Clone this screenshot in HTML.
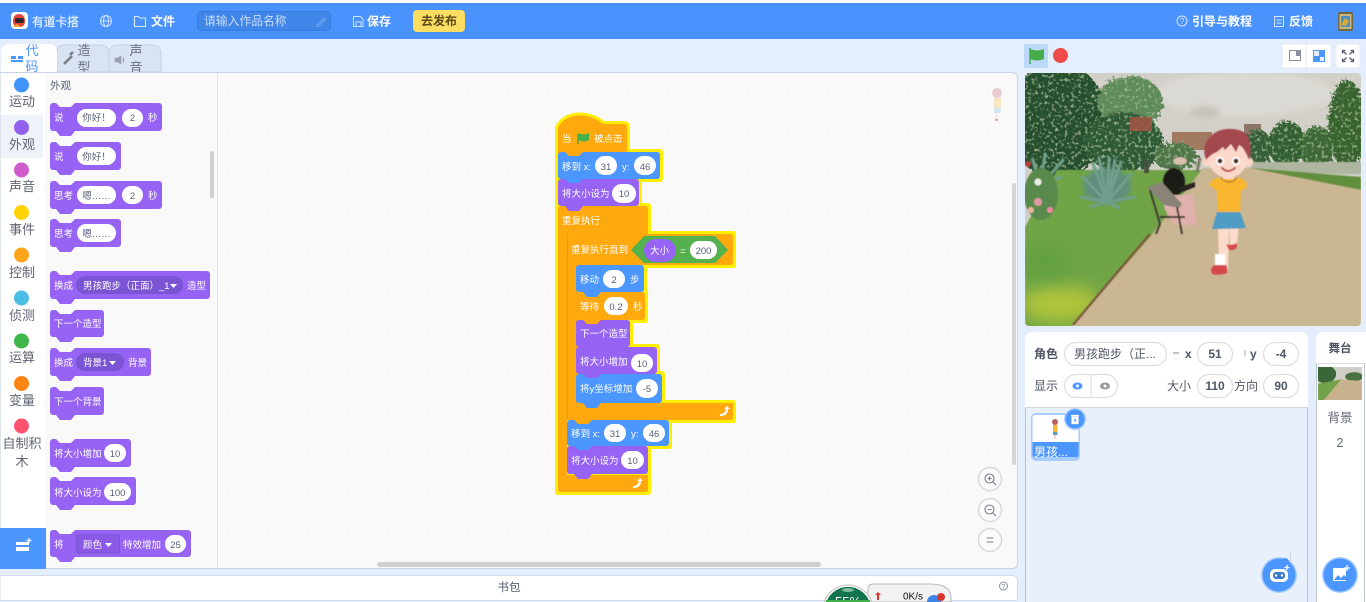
<!DOCTYPE html>
<html lang="zh"><head><meta charset="utf-8"><title>有道卡搭</title>
<style>
html,body{margin:0;padding:0;width:1366px;height:602px;overflow:hidden;background:#e4eefd}
svg{display:block}
text{font-family:"Liberation Sans","Noto Sans CJK SC","WenQuanYi Zen Hei",sans-serif}
.w{fill:#fff;font-size:9.5px}
.n{fill:#575e75;font-size:9.5px;text-anchor:middle}
.c{fill:#5f6473;font-size:13px;text-anchor:middle}
.h{fill:#fff;font-size:12px;font-weight:bold}
.s{fill:#4f5566;font-size:12px}
.sb{fill:#4f5566;font-size:12px;font-weight:bold;text-anchor:middle}
.p{fill:#9663f5}.u{fill:#4c97ff}.o{fill:#ffa90f}
.pill{fill:#fff}
</style></head><body>
<svg width="1366" height="602" viewBox="0 0 1366 602" xmlns="http://www.w3.org/2000/svg">
<defs>
<pattern id="dots" width="40" height="40" patternUnits="userSpaceOnUse" x="218" y="72"><circle cx="10" cy="20" r="1" fill="#f0f0f0"/></pattern>
<filter id="leaf" x="-15%" y="-15%" width="130%" height="130%"><feTurbulence type="fractalNoise" baseFrequency=".3" numOctaves="3" seed="7" result="n"/><feDisplacementMap in="SourceGraphic" in2="n" scale="11" result="d"/><feColorMatrix in="n" type="matrix" values="0 0 0 0 .40  0 0 0 0 .56  0 0 0 0 .34  0 0 0 3 -1.650" result="l"/><feComposite in="l" in2="d" operator="in" result="lc"/><feMerge><feMergeNode in="d"/><feMergeNode in="lc"/></feMerge></filter>
<filter id="soft"><feGaussianBlur stdDeviation="0.5"/></filter>
<filter id="soft3"><feGaussianBlur stdDeviation="2.5"/></filter>
<filter id="soft8" x="-30%" y="-30%" width="160%" height="160%"><feGaussianBlur stdDeviation="9"/></filter>
<clipPath id="stage"><rect x="0" y="0" width="336" height="253" rx="4"/></clipPath>
<clipPath id="pal"><rect x="45" y="73" width="173" height="496"/></clipPath>
</defs>

<!-- page + header -->
<rect width="1366" height="602" fill="#e4eefd"/>
<rect width="1366" height="3" fill="#fff"/>
<rect y="3" width="1366" height="36" fill="#4a93ff"/>
<rect x="11" y="12" width="17" height="17" rx="4" fill="#fff"/>
<path d="M13 21c0-5 3-7 6-7s6 2 6 7-3 6-6 6-6-1-6-6z" fill="#e5433d"/>
<rect x="15" y="18" width="9" height="5" rx="2" fill="#33262a"/>
<path d="M13 26l4-2 4 3h-6z" fill="#f4a533"/>
<text x="32" y="26" style="font-size:11.7px;fill:#e6f0ff;stroke:#e6f0ff;stroke-width:.25">有道卡搭</text>
<g fill="none" stroke="#cfe2ff" stroke-width="1"><circle cx="106" cy="21" r="5.5"/><ellipse cx="106" cy="21" rx="2.5" ry="5.5"/><path d="M100.5 21h11"/></g>
<path d="M134.5 16.5h4l1.500 1.500h5.500v8.500h-11z" fill="none" stroke="#dcebff" stroke-width="1.100"/>
<text x="151" y="25.500" class="h">文件</text>
<rect x="197.500" y="11.500" width="133" height="19" rx="4" fill="#3f86e8" stroke="#327ade"/>
<text x="204" y="25" style="font-size:11.800px;fill:#cbdffb">请输入作品名称</text>
<path d="M316 25l8-8 3 2-8 8h-3z" fill="#5c9bee"/>
<path d="M353.500 16.500h7l2.500 2.500v7.500h-9.500z M356 22h5v4.500h-5z" fill="none" stroke="#cfe2ff"/>
<text x="367" y="25.500" class="h">保存</text>
<rect x="413" y="10" width="52" height="22" rx="4" fill="#fbdd62"/>
<text x="439" y="25" style="font-size:12px;font-weight:bold;fill:#5d4a1c;text-anchor:middle">去发布</text>
<circle cx="1182" cy="21" r="5" fill="none" stroke="#d6e6ff"/>
<text x="1182" y="24" style="font-size:8px;fill:#d6e6ff;text-anchor:middle">?</text>
<text x="1192" y="25.500" class="h">引导与教程</text>
<path d="M1274.500 16.500h9v10h-9z M1276.500 20h5 M1276.500 23h5" fill="none" stroke="#d6e6ff"/>
<text x="1289" y="25.500" class="h">反馈</text>
<rect x="1338" y="12" width="15" height="19" rx="2" fill="#6e6648"/><rect x="1339.500" y="14" width="12" height="15" fill="#c9b77c"/><rect x="1341" y="16" width="9" height="11" fill="#4d8fc0"/><path d="M1341 25l4-7 4 3-3 5z" fill="#d8a734"/>

<!-- tabs -->
<path d="M57 72V52q0-7 7-7h36q9 0 9 9v18z" fill="#d9e3f2" stroke="#c8d2e2"/>
<path d="M109 72V54q0-9 9-9h34q9 0 9 9v18z" fill="#d9e3f2" stroke="#c8d2e2"/>
<path d="M1 72V53q0-9 9-9h38q9 0 9 9v19z" fill="#fff"/>
<path d="M11 56h5v3h-5z M18 56h5v3h-5z M11 60h12v2h-12z" fill="#4c97ff"/>
<path d="M64 64l8-8M70 55l3-3" stroke="#7b7f8a" stroke-width="2.500" fill="none"/>
<path d="M115 58h3l3-2v8l-3-2h-3z M123 57q2 3 0 6" fill="#9a9fad" stroke="#9a9fad" stroke-width=".6"/>
<text x="32" y="55" style="font-size:13px;fill:#4c97ff;text-anchor:middle">代</text>
<text x="32" y="71" style="font-size:13px;fill:#4c97ff;text-anchor:middle">码</text>
<text x="84" y="55" style="font-size:13px;fill:#6b7080;text-anchor:middle">造</text>
<text x="84" y="72" style="font-size:13px;fill:#6b7080;text-anchor:middle">型</text>
<text x="136" y="55" style="font-size:13px;fill:#6b7080;text-anchor:middle">声</text>
<text x="136" y="72" style="font-size:13px;fill:#6b7080;text-anchor:middle">音</text>

<!-- main panel -->
<path d="M0 72.500H1012q5.500 0 5.500 5.500V563q0 5.500-5.500 5.500H0z" fill="#f9f9f9" stroke="#c8d3e4"/>
<rect x="219" y="73" width="798" height="495" fill="url(#dots)"/>
<rect x="1" y="73" width="44" height="496" fill="#fff"/>
<rect x="1" y="115" width="42" height="43" fill="#eef3fa"/>
<path d="M217.500 73V568" stroke="#e2e4e8"/>
<g>
<circle cx="21.500" cy="85" r="7.500" fill="#3f94fb"/>
<circle cx="21.500" cy="127.500" r="7.500" fill="#9160ec"/>
<circle cx="21.500" cy="170" r="7.500" fill="#cf5ccb"/>
<circle cx="21.500" cy="212.500" r="7.500" fill="#ffd305"/>
<circle cx="21.500" cy="255" r="7.500" fill="#ffa51b"/>
<circle cx="21.500" cy="298" r="7.500" fill="#4cbde4"/>
<circle cx="21.500" cy="341" r="7.500" fill="#3fb64a"/>
<circle cx="21.500" cy="383.500" r="7.500" fill="#ff8414"/>
<circle cx="21.500" cy="426" r="7.500" fill="#ff5470"/>
<text x="22" y="106" class="c">运动</text>
<text x="22" y="149" class="c">外观</text>
<text x="22" y="191" class="c">声音</text>
<text x="22" y="234" class="c">事件</text>
<text x="22" y="277" class="c">控制</text>
<text x="22" y="320" class="c">侦测</text>
<text x="22" y="362" class="c">运算</text>
<text x="22" y="405" class="c">变量</text>
<text x="22" y="448" class="c">自制积</text>
<text x="22" y="466" class="c">木</text>
</g>
<rect x="0" y="528" width="46" height="41" fill="#4c97ff"/>
<path d="M16 542h13v3h-13z M16 547h13v4h-13z" fill="#fff"/>
<path d="M29 538v5M26.500 540.500h5" stroke="#fff" stroke-width="1.200"/>

<!-- palette -->
<g clip-path="url(#pal)">
<text x="50" y="89" style="font-size:10.500px;fill:#575e75">外观</text>
<g class="p">
<path d="M50 106a3 3 0 0 1 3-3h3l4 4h11l4-4h84a3 3 0 0 1 3 3v22a3 3 0 0 1-3 3h-84l-4 5h-11l-4-5h-3a3 3 0 0 1-3-3z"/>
<path d="M50 145a3 3 0 0 1 3-3h3l4 4h11l4-4h43a3 3 0 0 1 3 3v22a3 3 0 0 1-3 3h-43l-4 5h-11l-4-5h-3a3 3 0 0 1-3-3z"/>
<path d="M50 184a3 3 0 0 1 3-3h3l4 4h11l4-4h84a3 3 0 0 1 3 3v22a3 3 0 0 1-3 3h-84l-4 5h-11l-4-5h-3a3 3 0 0 1-3-3z"/>
<path d="M50 222a3 3 0 0 1 3-3h3l4 4h11l4-4h43a3 3 0 0 1 3 3v22a3 3 0 0 1-3 3h-43l-4 5h-11l-4-5h-3a3 3 0 0 1-3-3z"/>
<path d="M50 274a3 3 0 0 1 3-3h3l4 4h11l4-4h132a3 3 0 0 1 3 3v22a3 3 0 0 1-3 3h-132l-4 5h-11l-4-5h-3a3 3 0 0 1-3-3z"/>
<path d="M50 313a3 3 0 0 1 3-3h3l4 4h11l4-4h26a3 3 0 0 1 3 3v21a3 3 0 0 1-3 3h-26l-4 5h-11l-4-5h-3a3 3 0 0 1-3-3z"/>
<path d="M50 351a3 3 0 0 1 3-3h3l4 4h11l4-4h73a3 3 0 0 1 3 3v22a3 3 0 0 1-3 3h-73l-4 5h-11l-4-5h-3a3 3 0 0 1-3-3z"/>
<path d="M50 390a3 3 0 0 1 3-3h3l4 4h11l4-4h26a3 3 0 0 1 3 3v22a3 3 0 0 1-3 3h-26l-4 5h-11l-4-5h-3a3 3 0 0 1-3-3z"/>
<path d="M50 442a3 3 0 0 1 3-3h3l4 4h11l4-4h53a3 3 0 0 1 3 3v22a3 3 0 0 1-3 3h-53l-4 5h-11l-4-5h-3a3 3 0 0 1-3-3z"/>
<path d="M50 480a3 3 0 0 1 3-3h3l4 4h11l4-4h58a3 3 0 0 1 3 3v22a3 3 0 0 1-3 3h-58l-4 5h-11l-4-5h-3a3 3 0 0 1-3-3z"/>
<path d="M50 533a3 3 0 0 1 3-3h3l4 4h11l4-4h113a3 3 0 0 1 3 3v21a3 3 0 0 1-3 3h-113l-4 5h-11l-4-5h-3a3 3 0 0 1-3-3z"/>
</g>
<g class="pill">
<rect x="77" y="109" width="39" height="18" rx="9"/><rect x="122" y="109" width="21" height="18" rx="9"/>
<rect x="77" y="147" width="39" height="18" rx="9"/>
<rect x="77" y="186" width="39" height="18" rx="9"/><rect x="122" y="186" width="21" height="18" rx="9"/>
<rect x="77" y="224" width="39" height="18" rx="9"/>
<rect x="104" y="444" width="22" height="18" rx="9"/>
<rect x="104" y="483" width="27" height="18" rx="9"/>
<rect x="165" y="535" width="21" height="18" rx="9"/>
</g>
<rect x="76" y="276" width="107" height="18" rx="9" fill="#7a54d2"/>
<rect x="76" y="353" width="48" height="18" rx="9" fill="#7a54d2"/>
<rect x="76.500" y="535" width="43" height="18" rx="2" fill="#8a5ae6" stroke="#7a54d2"/>
<g class="w">
<text x="54" y="121">说</text><text x="148" y="121">秒</text>
<text x="54" y="160">说</text>
<text x="54" y="199">思考</text><text x="148" y="199">秒</text>
<text x="54" y="237">思考</text>
<text x="54" y="289">换成</text><text x="83" y="289">男孩跑步（正面）_1</text><path d="M170 284h7l-3.500 4z" fill="#fff"/><text x="187" y="289">造型</text>
<text x="54" y="327">下一个造型</text>
<text x="54" y="366">换成</text><text x="83" y="366">背景1</text><path d="M109 361h7l-3.500 4z" fill="#fff"/><text x="128" y="366">背景</text>
<text x="54" y="405">下一个背景</text>
<text x="54" y="457">将大小增加</text>
<text x="54" y="496">将大小设为</text>
<text x="54" y="548">将</text><text x="83" y="548">颜色</text><path d="M105 543h7l-3.500 4z" fill="#fff"/><text x="123" y="548">特效增加</text>
</g>
<g class="n">
<text x="96.500" y="121">你好！</text><text x="132.500" y="121">2</text>
<text x="96.500" y="160">你好！</text>
<text x="96.500" y="199">嗯……</text><text x="132.500" y="199">2</text>
<text x="96.500" y="237">嗯……</text>
<text x="115" y="457">10</text><text x="117.500" y="496">100</text><text x="175.500" y="548">25</text>
</g>
</g>
<rect x="210" y="151" width="4" height="47" rx="2" fill="#cfcfcf"/>

<!-- script: yellow glow -->
<g fill="#ffee00" stroke="#ffee00" stroke-width="6" stroke-linejoin="round">
<path d="M558 128C565 112 590 112 603 124H624q3 0 3 3V152H558z"/>
<rect x="558" y="152" width="102" height="27"/>
<rect x="558" y="179" width="81" height="27"/>
<rect x="558" y="206" width="90" height="28"/>
<rect x="558" y="206" width="18" height="286"/>
<rect x="567" y="234" width="166" height="31"/>
<rect x="576" y="265" width="68" height="27"/>
<rect x="576" y="292" width="69" height="28"/>
<rect x="576" y="320" width="54" height="27"/>
<rect x="576" y="347" width="81" height="27"/>
<rect x="576" y="374" width="86" height="29"/>
<rect x="567" y="403" width="166" height="17"/>
<rect x="567" y="420" width="102" height="26"/>
<rect x="567" y="446" width="81" height="28"/>
<rect x="558" y="475" width="90" height="17"/>
</g>
<!-- script: blocks -->
<path class="o" d="M558 128C565 112 590 112 603 124H624q3 0 3 3V155H558z"/>
<path class="o" d="M558 209q0-3 3-3h84q3 0 3 3v25h-81v241h81v14q0 3-3 3h-84q-3 0-3-3z"/>
<path class="o" d="M567 237q0-3 3-3h160q3 0 3 3v25q0 3-3 3h-154v138h157v14q0 3-3 3H567z"/>
<path d="M567.500 234v186M576.500 265v138" stroke="#ee9c0a" fill="none"/>
<rect class="o" x="576" y="292" width="69" height="28" rx="3"/>
<rect class="u" x="576" y="265" width="68" height="27" rx="3"/>
<rect class="p" x="576" y="320" width="54" height="27" rx="3"/>
<rect class="p" x="576" y="347" width="81" height="27" rx="3"/>
<rect class="u" x="576" y="374" width="86" height="29" rx="3"/>
<rect class="u" x="567" y="420" width="102" height="26" rx="3"/>
<rect class="p" x="567" y="446" width="81" height="28" rx="3"/>
<rect class="u" x="558" y="152" width="102" height="27" rx="3"/>
<rect class="p" x="558" y="179" width="81" height="27" rx="3"/>
<!-- bumps -->
<path class="o" d="M565 152l4 4h10l4-4z"/>
<path class="u" d="M565 179l4 4h10l4-4z"/>
<path class="p" d="M565 206l4 5h10l4-5z"/>
<path class="o" d="M574 234l4 4h10l4-4z"/>
<path class="u" d="M583 292l4 5h10l4-5z"/>
<path class="o" d="M583 320l4 4h10l4-4z"/>
<path class="p" d="M583 347l4 4h10l4-4z"/>
<path class="p" d="M583 374l4 4h10l4-4z"/>
<path class="u" d="M583 403l4 5h10l4-5z"/>
<path class="o" d="M574 420l4 4h10l4-4z"/>
<path class="u" d="M574 446l4 4h10l4-4z"/>
<path class="p" d="M574 474l4 5h10l4-5z"/>
<!-- hexagon -->
<path d="M631 250l13-14h71l13 14-13 13h-71z" fill="#55b04e"/>
<rect x="644" y="239" width="32" height="23" rx="11.500" fill="#9663f5"/>
<g class="pill">
<rect x="595" y="156" width="22" height="19" rx="9.500"/><rect x="634" y="156" width="22" height="19" rx="9.500"/>
<rect x="612" y="184" width="24" height="19" rx="9.500"/>
<rect x="690" y="241" width="27" height="18" rx="9"/>
<rect x="603" y="270" width="22" height="18" rx="9"/>
<rect x="604" y="297" width="24" height="18" rx="9"/>
<rect x="631" y="354" width="22" height="18" rx="9"/>
<rect x="636" y="379" width="22" height="19" rx="9.500"/>
<rect x="604" y="424" width="22" height="18" rx="9"/><rect x="643" y="424" width="22" height="18" rx="9"/>
<rect x="621" y="451" width="23" height="18" rx="9"/>
</g>
<path d="M578 134v10" stroke="#3a9d3a" stroke-width="1.200"/><path d="M578 133q6 3 11 0v7q-5 3-11 0z" fill="#46b04a"/>
<g class="w">
<text x="562" y="142">当</text><text x="594" y="142">被点击</text>
<text x="562" y="170">移到 x:</text><text x="622" y="170">y:</text>
<text x="562" y="197">将大小设为</text>
<text x="562" y="224">重复执行</text>
<text x="571" y="253">重复执行直到</text>
<text x="650" y="254">大小</text><text x="680" y="254">=</text>
<text x="580" y="283">移动</text><text x="630" y="283">步</text>
<text x="580" y="310">等待</text><text x="633" y="310">秒</text>
<text x="580" y="337">下一个造型</text>
<text x="580" y="365">将大小增加</text>
<text x="580" y="392">将y坐标增加</text>
<text x="571" y="437">移到 x:</text><text x="631" y="437">y:</text>
<text x="571" y="464">将大小设为</text>
</g>
<g class="n">
<text x="606" y="170">31</text><text x="645" y="170">46</text>
<text x="624" y="197">10</text><text x="703.500" y="254">200</text>
<text x="614" y="283">2</text><text x="616" y="310">0.2</text>
<text x="642" y="367">10</text><text x="647" y="392">-5</text>
<text x="615" y="437">31</text><text x="654" y="437">46</text><text x="632.500" y="464">10</text>
</g>
<path d="M720 414q5 0 6-5l-2 0 3-3 3 3-2 0q0 7-8 7z" fill="#fff"/>
<path d="M633 486q5 0 6-5l-2 0 3-3 3 3-2 0q0 7-8 7z" fill="#fff"/>

<!-- workspace decorations -->
<g opacity=".45">
<circle cx="997" cy="93" r="5" fill="#d89aa0"/><rect x="994" y="98" width="7" height="10" fill="#fbd382"/><rect x="994" y="108" width="7" height="5" fill="#a8d0e0"/><rect x="995" y="113" width="3" height="7" fill="#f8dccb"/><rect x="995" y="119" width="3" height="2" fill="#d8464a"/>
</g>
<rect x="377" y="562" width="444" height="5" rx="2.500" fill="#cfcfcf"/>
<rect x="1012" y="183" width="4" height="282" rx="2" fill="#d4d4d4"/>
<g fill="#fbfbfb" stroke="#d9dadd" stroke-width="1.500">
<circle cx="990" cy="479" r="11.500"/><circle cx="990" cy="510" r="11.500"/><circle cx="990" cy="540" r="11.500"/>
</g>
<g fill="none" stroke="#7b7f8a" stroke-width="1.100">
<circle cx="989.500" cy="478.500" r="4.500"/><path d="M993 482l3 3M987.500 478.500h4M989.500 476.500v4"/>
<circle cx="989.500" cy="509.500" r="4.500"/><path d="M993 513l3 3M987.500 509.500h4"/>
<path d="M986.500 538h7M986.500 542h7"/>
</g>

<!-- backpack -->
<path d="M0 575.500H1012q5.500 0 5.500 5.500V600.500H0z" fill="#fff" stroke="#d5dce8"/>
<text x="509" y="591" style="font-size:11.500px;fill:#575e75;text-anchor:middle">书包</text>
<circle cx="1003.500" cy="586" r="4" fill="none" stroke="#8a8f9b"/>
<text x="1003.500" y="589" style="font-size:7px;fill:#8a8f9b;text-anchor:middle">?</text>
<rect x="0" y="601" width="1024" height="1" fill="#e4eefd"/>

<!-- stage controls -->
<rect x="1024" y="44" width="24" height="24" rx="2" fill="#bcd9fb"/>
<path d="M1030 48v16" stroke="#44ad4a" stroke-width="1.500"/><path d="M1030 49q7 3 14 0v10q-7 3-14 0z" fill="#44ad4a"/>
<circle cx="1060.500" cy="55.500" r="7.500" fill="#ee4b4b"/>
<rect x="1282" y="44" width="25" height="24" rx="2" fill="#fff" stroke="#e3e9f2"/>
<rect x="1306" y="44" width="25" height="24" rx="2" fill="#fff" stroke="#e3e9f2"/>
<rect x="1336" y="44" width="24" height="24" rx="2" fill="#fff" stroke="#e3e9f2"/>
<path d="M1289.500 50.500h11v10h-11z" fill="none" stroke="#8a8f9b"/><rect x="1296" y="51" width="4" height="5" fill="#8a8f9b"/>
<rect x="1313" y="50" width="12" height="12" fill="#4c97ff"/><rect x="1314" y="51" width="5" height="5" fill="#e4eefd"/><rect x="1320" y="57" width="4" height="4" fill="#e4eefd"/>
<path d="M1343 51l3.500 3.500M1353 51l-3.500 3.500M1343 61l3.500-3.500M1353 61l-3.500-3.500 M1342.500 53.500v-3h3M1353.500 53.500v-3h-3M1342.500 58.500v3h3M1353.500 58.500v3h-3" stroke="#575e75" stroke-width="1.300" fill="none"/>

<!-- stage scene -->
<svg x="1025" y="73" width="336" height="253" viewBox="0 0 336 253">
<g clip-path="url(#stage)"><g transform="translate(0,-1)">
<rect width="340" height="256" fill="#d2d0c9"/>
<g filter="url(#soft3)"><ellipse cx="220" cy="22" rx="90" ry="22" fill="#dbd9d3"/><ellipse cx="180" cy="40" rx="15" ry="6" fill="#c6c4bd"/></g>
<rect x="147" y="60" width="40" height="18" fill="#a27a62"/><rect x="219" y="52" width="17" height="14" fill="#8e7468"/>
<g filter="url(#leaf)">
<ellipse cx="32" cy="48" rx="50" ry="58" fill="#284f2e"/>
<ellipse cx="105" cy="30" rx="33" ry="26" fill="#5f8a5a"/>
<ellipse cx="98" cy="70" rx="40" ry="30" fill="#2e5a36"/>
<ellipse cx="150" cy="84" rx="22" ry="14" fill="#4f7648"/>
<ellipse cx="322" cy="52" rx="19" ry="44" fill="#37622f"/>
<ellipse cx="232" cy="76" rx="15" ry="19" fill="#355f34"/>
<ellipse cx="262" cy="72" rx="19" ry="23" fill="#335e32"/>
<ellipse cx="292" cy="76" rx="17" ry="22" fill="#3c6836"/>
</g>
<rect x="105" y="45" width="22" height="14" fill="#a45544" opacity=".85"/>
<g filter="url(#soft)">
<rect x="226" y="90" width="110" height="12" fill="#aeb6a0"/>
<polygon points="0,155 32,98 180,98 125,170 45,256 0,256" fill="#6fa446"/>
</g>
<ellipse cx="35" cy="232" rx="40" ry="18" fill="#b2c63a" filter="url(#soft8)"/>
<ellipse cx="20" cy="190" rx="25" ry="18" fill="#62a040" filter="url(#soft8)"/>
<g filter="url(#soft)">
<polygon points="178,96 225,96 336,113 336,256 45,256 125,165" fill="#cab692"/>
<polygon points="225,96 336,105 336,118" fill="#628f3e"/>
<polyline points="48,253 80,215 125,162" fill="none" stroke="#7b5b38" stroke-width="2.500"/>
</g>
<ellipse cx="82" cy="114" rx="24" ry="18" fill="#5f8f7c" filter="url(#soft3)"/>
<g stroke="#6f9f8d" stroke-width="3" fill="none" filter="url(#soft)" stroke-linecap="round">
<path d="M82 130L58 105M82 130L68 92M82 130L84 86M82 130L96 90M82 130L106 102M82 130L56 125M82 130L110 125M82 130L66 135M82 130L94 136M82 130L74 86M82 130L90 88"/>
<path d="M15 115L8 88M15 115L20 82M15 115L38 88M15 115L36 105"/>
</g>
<g filter="url(#soft)">
<ellipse cx="16" cy="122" rx="17" ry="26" fill="#5a8a4c"/>
<circle cx="13" cy="110" r="3.500" fill="#eef0e4"/><circle cx="13" cy="130" r="4" fill="#e29aa4"/><circle cx="25" cy="138" r="3" fill="#ee8aa0"/><circle cx="3" cy="92" r="3" fill="#b84040"/><circle cx="6" cy="138" r="3" fill="#e8b8a0"/>
<ellipse cx="155" cy="89" rx="7" ry="4" fill="#d9bfae"/>
<ellipse cx="149" cy="110" rx="11" ry="14" fill="#1f1a18"/><path d="M155 115l15-5v5l-15 6z" fill="#2a2422"/>
<path d="M136 123h32l4 30h-22l-10-15z" fill="#e0b0ac"/>
<path d="M122 115l15-5 20 22-3 4-15-3z" fill="#8a8478"/>
<path d="M125 118l10 34-4 10M152 135l5 27M135 145h25" stroke="#453a32" stroke-width="2" fill="none"/>
<path d="M172 100l3-14" stroke="#807a66" stroke-width="3"/>
<rect x="119" y="88" width="5" height="13" fill="#45503e"/>
</g>
<!-- boy -->
<g filter="url(#soft)">
<path d="M193 155h11l-1 44h-9z" fill="#fbdccb"/>
<path d="M204 150h10l-2 24h-7z" fill="#fbdccb"/>
<rect x="190" y="182" width="10" height="11" fill="#fff"/>
<path d="M186 198q1-6 8-5h7q2 3 1 8-8 3-15 1z" fill="#d44848"/>
<path d="M201 172q5 2 11-1l0 4q-2 4-8 3z" fill="#d84a50"/>
<path d="M192 140h23l6 16q-18 1-34 1z" fill="#4f9cc4"/>
<path d="M192 106h24l5 4 1 5-6 4-1 21h-22l-1-21-8-6 3-5z" fill="#f9b62f"/>
<path d="M196 106q8 8 16 0" fill="none" stroke="#a87a20" stroke-width="1.200"/>
<rect x="198" y="98" width="11" height="9" fill="#fbdccb"/>
<circle cx="182" cy="90" r="4.500" fill="#fbd6c6"/><circle cx="224" cy="90" r="4.500" fill="#fbd6c6"/>
<ellipse cx="203" cy="85" rx="20" ry="21" fill="#fbd8c9"/>
<path d="M181 88q-5-14 4-23 8-9 23-8 15 1 17 14 2 8-1 17-3-8-7-13l-3-2-3 7-5-8-6 6-2-3-6 5q-6 2-11 8z" fill="#a34a4e"/>
<circle cx="195" cy="89" r="4.200" fill="#fff"/><circle cx="211" cy="89" r="4.200" fill="#fff"/>
<circle cx="195" cy="89" r="2.400" fill="#4e2c1c"/><circle cx="211" cy="89" r="2.400" fill="#4e2c1c"/>
<path d="M197 96q6 6 13 0" fill="none" stroke="#b4564c" stroke-width="2" stroke-linecap="round"/>
</g>
</g></g>
</svg>

<!-- sprite panel -->
<path d="M1025 602V340q0-8 8-8H1300q8 0 8 8V602z" fill="#e8f0fc"/>
<path d="M1025 407.500V340q0-8 8-8H1300q8 0 8 8V407.500z" fill="#fff"/>
<path d="M1025 407.500H1308" stroke="#d2d6dd"/>
<path d="M1025.500 408V602M1307.500 408V602" stroke="#b9c3d3"/>
<text x="1034" y="358" class="s" style="font-weight:bold">角色</text>
<g fill="#fff" stroke="#dcdde0" stroke-width="1.200">
<rect x="1064.500" y="342.500" width="102" height="23" rx="11.500"/>
<rect x="1197.500" y="342.500" width="35" height="23" rx="11.500"/>
<rect x="1263.500" y="342.500" width="35" height="23" rx="11.500"/>
<rect x="1064.500" y="374.500" width="53" height="23" rx="11.500"/>
<rect x="1197.500" y="374.500" width="35" height="23" rx="11.500"/>
<rect x="1263.500" y="374.500" width="35" height="23" rx="11.500"/>
</g>
<path d="M1091 375v23" stroke="#dcdde0"/>
<text x="1074" y="358" class="s">男孩跑步（正...</text>
<path d="M1173 353h6" stroke="#808590" stroke-width="1"/>
<text x="1185" y="358" class="s" style="font-weight:bold">x</text>
<path d="M1245 350v6" stroke="#a0a5b0" stroke-width="1"/>
<text x="1250" y="358" class="s" style="font-weight:bold">y</text>
<text x="1215" y="358" class="sb">51</text><text x="1281" y="358" class="sb">-4</text>
<text x="1034" y="390" class="s">显示</text>
<text x="1167" y="390" class="s">大小</text>
<text x="1215" y="390" class="sb">110</text>
<text x="1234" y="390" class="s">方向</text>
<text x="1281" y="390" class="sb">90</text>
<ellipse cx="1077.500" cy="386" rx="5" ry="3.500" fill="#4c97ff"/><circle cx="1077.500" cy="386" r="1.500" fill="#fff"/>
<ellipse cx="1105" cy="386" rx="5" ry="3.500" fill="#9a9a9a"/><circle cx="1105" cy="386" r="1.500" fill="#fff"/>

<!-- sprite thumb -->
<rect x="1031" y="413" width="49" height="48" rx="5" fill="#a9ccff"/>
<rect x="1032.500" y="415" width="46" height="41" rx="3" fill="#fff"/>
<path d="M1032.500 442h46v13q0 2-2 2h-42q-2 0-2-2z" fill="#4c97ff"/>
<text x="1034" y="456" style="font-size:12px;fill:#fff">男孩...</text>
<circle cx="1055" cy="422" r="3" fill="#b46060"/><rect x="1053" y="425" width="4.500" height="7" fill="#f5b53a"/><rect x="1053" y="432" width="4.500" height="3" fill="#5f9fc0"/><rect x="1054" y="435" width="2" height="4" fill="#f5d9c9"/>
<circle cx="1075" cy="419" r="11" fill="#a9ccff"/><circle cx="1075" cy="419" r="9.500" fill="#4c97ff"/>
<path d="M1071 415.500h8M1072 417h6v6.500h-6z" stroke="#fff" stroke-width="1.200" fill="#fff"/><path d="M1074 419l2 2.500M1076 419l-2 2.500" stroke="#4c97ff" stroke-width=".8"/>

<!-- robot button -->
<circle cx="1279" cy="575" r="18" fill="#a9ccff"/><circle cx="1279" cy="575" r="16.500" fill="#4c97ff"/>
<circle cx="1285" cy="562" r="4" fill="#4c97ff"/>
<rect x="1270" y="569" width="18" height="13" rx="5" fill="#fff"/><rect x="1273" y="572" width="12" height="7" rx="3" fill="#3c79cc"/>
<circle cx="1276" cy="575.500" r="1.200" fill="#fff"/><circle cx="1282" cy="575.500" r="1.200" fill="#fff"/>
<path d="M1287 565v5M1284.500 567.500h5" stroke="#fff" stroke-width="1.200"/>
<path d="M1290.500 552v10" stroke="#cfd6e2"/>

<!-- stage panel -->
<path d="M1316 602V340q0-8 8-8H1366V602z" fill="#fff"/>
<path d="M1316.500 363V602M1364.500 363V602" stroke="#c0c9d6"/>
<path d="M1316 363.500H1366" stroke="#dcdfe4"/>
<text x="1340" y="352" class="sb" style="font-size:11.500px">舞台</text>
<svg x="1318" y="367" width="44" height="33" viewBox="0 0 340 256">
<rect width="340" height="256" fill="#d0cec7"/><ellipse cx="55" cy="55" rx="85" ry="70" fill="#3a6638"/><ellipse cx="280" cy="75" rx="70" ry="35" fill="#4a7240"/><polygon points="0,130 180,96 45,256 0,256" fill="#72a24a"/><polygon points="180,96 340,110 340,256 45,256" fill="#c8b28d"/>
</svg>
<text x="1340" y="422" class="c" style="font-size:12.500px">背景</text>
<text x="1340" y="447" class="c" style="font-size:12.500px">2</text>
<circle cx="1340" cy="575" r="18" fill="#a9ccff"/><circle cx="1340" cy="575" r="16.500" fill="#4c97ff"/>
<path d="M1334 568h12v13h-13v-13z" fill="#fff"/><path d="M1334 580l4-5 3 3 3-3 2 2v3z" fill="#4c97ff"/>
<path d="M1347 565v6M1344 568h6" stroke="#fff" stroke-width="1.200"/>

<!-- net widget -->
<svg x="820" y="580" width="135" height="22" viewBox="820 580 135 22">
<path d="M868 602V589q0-5 5-5H930q20 0 21 13V602z" fill="#f2f2f2" stroke="#b9b9b9"/>
<path d="M824.300 602A25 25 0 0 1 871.700 602z" fill="#fff" stroke="#c4bcbc"/>
<path d="M826.400 602A23 23 0 0 1 869.600 602z" fill="#11744c"/>
<ellipse cx="848" cy="590" rx="6" ry="2" fill="#7fb89c"/>
<text x="848" y="606" style="font-size:13px;fill:#fff;text-anchor:middle">55%</text>
<rect x="826" y="600" width="44" height="2" fill="#3fb04a"/>
<path d="M878 592l3 3h-2v5h-2v-5h-2z" fill="#d9352b"/>
<text x="903" y="599.500" style="font-size:10px;fill:#111">0K/s</text>
<path d="M927 602A7 7 0 0 1 941 602z" fill="#3d84e6"/>
<circle cx="941" cy="597" r="4" fill="#d9352b"/>
</svg>
</svg>
</body></html>
